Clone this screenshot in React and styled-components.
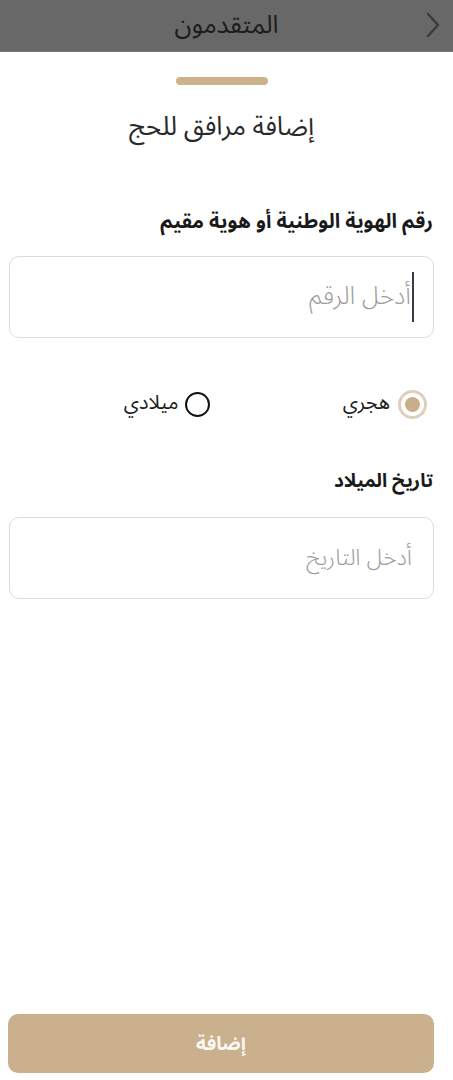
import React from "react";
import styled, { createGlobalStyle } from "styled-components";

const GlobalStyle = createGlobalStyle`
  html, body {
    margin: 0;
    padding: 0;
    background: #ffffff;
  }
  body {
    font-family: "Noto Sans Arabic", "DejaVu Sans", "Noto Sans", sans-serif;
    color: #222;
  }
`;

const Screen = styled.div`
  width: 453px;
  height: 1080px;
  display: flex;
  flex-direction: column;
  background: #ffffff;
  overflow: hidden;
`;

const TopBar = styled.header`
  height: 52px;
  flex: none;
  background: #686868;
  display: flex;
  align-items: center;
  justify-content: center;
  position: relative;
  border-bottom: 1px solid #7a7a7a;
  box-sizing: border-box;
`;

const TopTitle = styled.h1`
  margin: 0;
  font-size: 25px;
  font-weight: 400;
  color: #1c1c1c;
  line-height: 1;
  padding-bottom: 1px;
`;

const BackChevron = styled.svg`
  position: absolute;
  right: 12px;
  top: 11px;
  width: 16px;
  height: 28px;
`;

const Sheet = styled.main`
  flex: 1;
  display: flex;
  flex-direction: column;
  padding: 0 19px 7px 9px;
`;

const Handle = styled.div`
  width: 92px;
  height: 8px;
  border-radius: 4px;
  background: #cdb38d;
  align-self: center;
  margin-top: 25px;
`;

const SheetTitle = styled.h2`
  margin: 25px 0 0;
  text-align: center;
  font-size: 26px;
  font-weight: 400;
  color: #2a2a2a;
  line-height: 34px;
`;

const FieldLabel = styled.label`
  display: block;
  margin-top: ${(p) => p.$top}px;
  font-size: ${(p) => p.$size}px;
  font-weight: 700;
  color: #1a1a1a;
  line-height: 26px;
  padding-right: 1px;
`;

const FieldBox = styled.div`
  margin-top: ${(p) => p.$top}px;
  height: 82px;
  box-sizing: border-box;
  border: 1.5px solid #dcdcdc;
  border-radius: 10px;
  display: flex;
  align-items: center;
  padding: 0 21px;
`;

const Placeholder = styled.span`
  font-size: ${(p) => p.$size}px;
  font-weight: 300;
  color: #9d9d9d;
  line-height: 1;
  padding-bottom: 2px;
`;

const Caret = styled.span`
  width: 2px;
  height: 50px;
  background: #3a3a44;
  margin-left: 1px;
  margin-right: -2px;
`;

const ChoiceRow = styled.div`
  margin-top: 52px;
  display: grid;
  grid-template-columns: 1fr 1fr;
  padding: 0 7px;
`;

const Choice = styled.div`
  display: flex;
  align-items: center;
  gap: ${(p) => p.$gap}px;
  padding-right: ${(p) => p.$pad}px;
`;

const RadioDot = styled.span`
  box-sizing: border-box;
  display: inline-flex;
  align-items: center;
  justify-content: center;
  width: ${(p) => (p.$checked ? 29 : 25)}px;
  height: ${(p) => (p.$checked ? 29 : 25)}px;
  border-radius: 50%;
  border: ${(p) => (p.$checked ? "3px solid #dccfbc" : "2.5px solid #111")};
  background: #fff;

  &::after {
    content: "";
    display: ${(p) => (p.$checked ? "block" : "none")};
    width: 15px;
    height: 15px;
    border-radius: 50%;
    background: #c8ae8a;
  }
`;

const ChoiceText = styled.span`
  font-size: 20px;
  color: #1e1e1e;
  line-height: 1;
  padding-bottom: 3px;
`;

const Spacer = styled.div`
  flex: 1;
`;

const SubmitButton = styled.button`
  height: 59px;
  margin-left: -1px;
  border: none;
  border-radius: 10px;
  background: #cab08d;
  color: rgba(255, 255, 255, 0.92);
  font-family: inherit;
  font-size: 19px;
  font-weight: 700;
  padding-bottom: 1px;
`;

export default function App() {
  return (
    <>
      <GlobalStyle />
      <Screen dir="rtl">
        <TopBar>
          <TopTitle>المتقدمون</TopTitle>
          <BackChevron viewBox="0 0 16 28" aria-hidden="true">
            <path
              d="M3 3 L13 14 L3 25"
              fill="none"
              stroke="#3e3a36"
              strokeWidth="2.4"
              strokeLinecap="round"
              strokeLinejoin="round"
            />
          </BackChevron>
        </TopBar>

        <Sheet>
          <Handle />
          <SheetTitle>إضافة مرافق للحج</SheetTitle>

          <FieldLabel $top={65} $size={20}>
            رقم الهوية الوطنية أو هوية مقيم
          </FieldLabel>
          <FieldBox $top={21}>
            <Caret />
            <Placeholder $size={25}>أدخل الرقم</Placeholder>
          </FieldBox>

          <ChoiceRow>
            <Choice $gap={8} $pad={0}>
              <RadioDot $checked />
              <ChoiceText>هجري</ChoiceText>
            </Choice>
            <Choice $gap={6} $pad={12}>
              <RadioDot />
              <ChoiceText>ميلادي</ChoiceText>
            </Choice>
          </ChoiceRow>

          <FieldLabel $top={49} $size={19}>
            تاريخ الميلاد
          </FieldLabel>
          <FieldBox $top={23}>
            <Placeholder $size={23}>أدخل التاريخ</Placeholder>
          </FieldBox>

          <Spacer />
          <SubmitButton type="button">إضافة</SubmitButton>
        </Sheet>
      </Screen>
    </>
  );
}
